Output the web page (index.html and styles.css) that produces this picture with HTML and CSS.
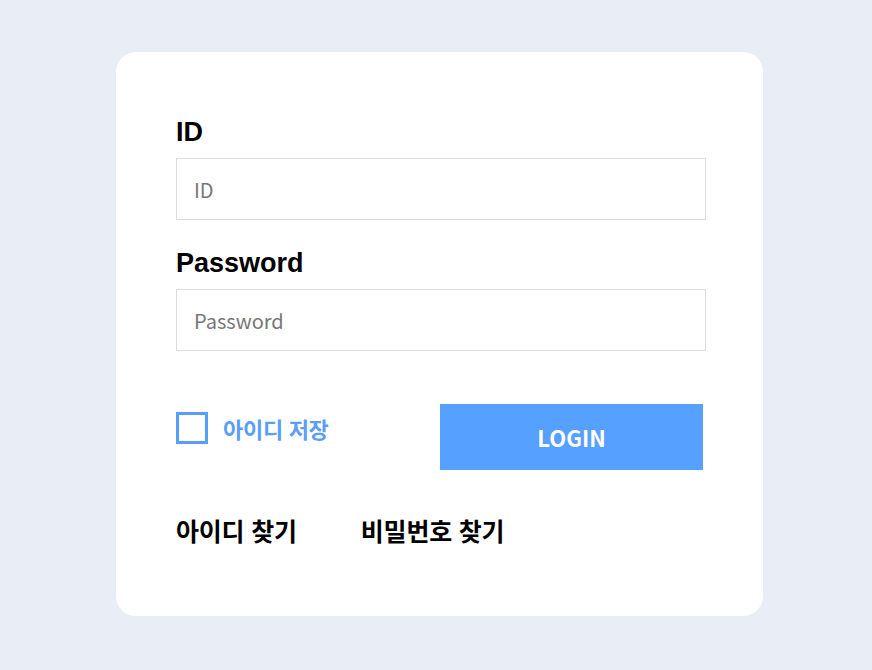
FILE: index.html
```html
<!DOCTYPE html>
<html lang="ko">

<head>
    <meta charset="UTF-8">
    <meta name="viewport" content="width=device-width, initial-scale=1.0">
    <title>로그인</title>
    <link rel="stylesheet" href="styles.css">
</head>

<body>
    <div class="login-wrap">
        <form class="login-box">
            <label class="label" for="user-id">ID</label>
            <input class="input" id="user-id" type="text" placeholder="ID">
            <label class="label" for="user-pw">Password</label>
            <input class="input" id="user-pw" type="password" placeholder="Password">
            <div class="action-row">
                <label class="save-id">
                    <input type="checkbox">
                    <span class="box"></span>
                    <span class="save-text">아이디 저장</span>
                </label>
                <button class="login-btn" type="button">LOGIN</button>
            </div>
            <div class="find-links">
                <a href="#">아이디 찾기</a>
                <a href="#">비밀번호 찾기</a>
            </div>
        </form>
    </div>
</body>

</html>
```

FILE: styles.css
```css
* {
    margin: 0;
    padding: 0;
    box-sizing: border-box;
}

body {
    background-color: #e9eef6;
    font-family: "Noto Sans CJK KR", "Noto Sans", sans-serif;
}

.login-wrap {
    padding: 52px 0 0 116px;
}

.login-box {
    display: flex;
    flex-direction: column;
    width: 647px;
    height: 564px;
    padding: 60px 60px 0 60px;
    background-color: #fff;
    border-radius: 20px;
}

.label {
    font-family: "Liberation Sans", Arial, sans-serif;
    font-weight: bold;
    font-size: 27px;
    line-height: 40px;
    color: #000;
}

.input {
    width: 530px;
    height: 62px;
    margin: 6px 0 23px 0;
    padding: 0 17px;
    border: 1px solid #dcdcdc;
    font-family: "Noto Sans CJK KR", sans-serif;
    font-size: 20px;
    color: #333;
    outline: none;
}

.input::placeholder {
    color: #777;
}

.action-row {
    display: flex;
    align-items: center;
    justify-content: space-between;
    width: 527px;
    margin-top: 30px;
}

.save-id {
    display: flex;
    align-items: center;
    margin-top: -18px;
    cursor: pointer;
}

.save-id input {
    display: none;
}

.save-id .box {
    width: 32px;
    height: 32px;
    border: 3px solid #569ff9;
}

.save-text {
    margin-left: 15px;
    font-weight: bold;
    font-size: 22px;
    color: #5a9ef8;
    letter-spacing: -0.3px;
}

.login-btn {
    width: 263px;
    height: 66px;
    border: none;
    background-color: #56a0ff;
    color: #fff;
    font-family: "Noto Sans CJK KR", sans-serif;
    font-weight: bold;
    font-size: 22px;
    cursor: pointer;
}

.find-links {
    display: flex;
    gap: 64px;
    margin-top: 42px;
}

.find-links a {
    font-weight: bold;
    font-size: 25px;
    color: #000;
    text-decoration: none;
    letter-spacing: -0.2px;
}
```
